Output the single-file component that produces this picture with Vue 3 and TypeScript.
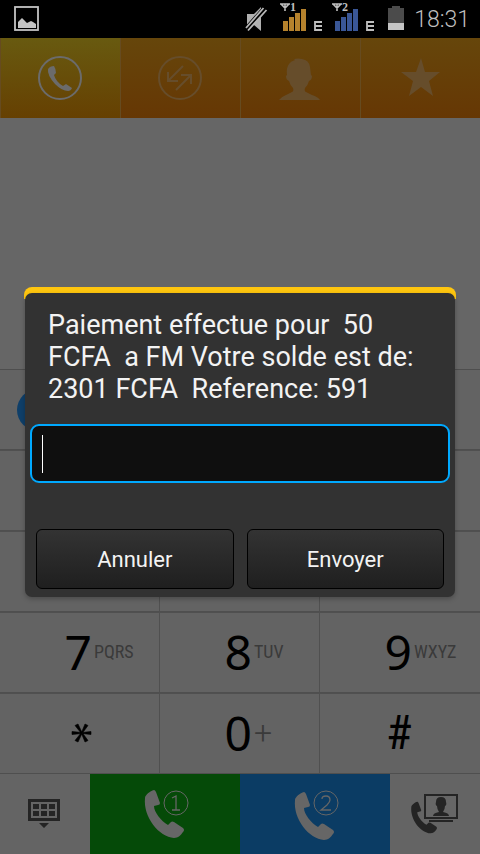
<script setup lang="ts">
import { ref } from 'vue'

interface Key {
  digit: string
  letters: string
  sign?: boolean
}

const tabs = [
  { id: 'dial', label: 'Clavier' },
  { id: 'logs', label: 'Journaux' },
  { id: 'contacts', label: 'Contacts' },
  { id: 'favorites', label: 'Favoris' },
]
const activeTab = ref('dial')

const signals = [
  { sim: '1', tone: 'amber' },
  { sim: '2', tone: 'azure' },
]

const keys: Key[] = [
  { digit: '7', letters: 'PQRS' },
  { digit: '8', letters: 'TUV' },
  { digit: '9', letters: 'WXYZ' },
  { digit: '*', letters: '' },
  { digit: '0', letters: '+', sign: true },
  { digit: '#', letters: '' },
]

const handset =
  'M2 9 C2 6 7 2 11 1 Q12 1 13 3 L17 14 Q17 16 15 16 L11 17 C11 23 18 32 25 36 L28 33 Q29 32 31 33 L40 39 Q42 41 40 43 C38 46 35 49 31 49 C16 48 0 28 2 9Z'

const message = 'Paiement effectue pour  50 FCFA  a FM Votre solde est de: 2301 FCFA  Reference: 591'
const reply = ref('')
</script>

<template>
  <div class="screen">
    <header class="status">
      <svg class="shot" viewBox="0 0 26 26" aria-hidden="true">
        <rect x="1" y="1" width="23" height="23" fill="none" stroke="#c4c4c4" stroke-width="1.8" />
        <path d="M4 22V16L6 14L8 12L10 14L13 17L17 15L19 16L22 18V22Z" fill="#c4c4c4" />
      </svg>
      <div class="indicators">
        <svg class="mute" viewBox="0 0 24 24" aria-hidden="true">
          <path d="M1 7H8L15 0V24L8 18H1Z" fill="#b0b0b0" />
          <path d="M0 22.500L18.500 1.500" stroke="#000" stroke-width="5" />
          <path d="M2 23.500L20.500 3M0 21L17.500 1" stroke="#b8b8b8" stroke-width="1.8" />
        </svg>
        <svg v-for="s in signals" :key="s.sim" class="signal" :class="s.tone" viewBox="0 0 42 31" aria-hidden="true">
          <path d="M0 4H10M1 4L5 8L9 4M5 4V11" fill="none" stroke="#bebebe" stroke-width="1.6" />
          <text x="10" y="11" class="sim">{{ s.sim }}</text>
          <path class="bars" d="M3 21H8V31H3ZM9 17H14V31H9ZM15 13H20V31H15ZM21 9H26V31H21Z" />
          <path d="M42 22H35V30H42M35 26H42" fill="none" stroke="#bebebe" stroke-width="1.8" />
        </svg>
        <svg class="battery" viewBox="0 0 20 24" aria-hidden="true">
          <path d="M4 2H8V0H16V2H20V24H4Z" fill="#4b4b4b" />
          <path d="M4 17H20V24H4Z" fill="#c4c4c4" />
        </svg>
        <time class="clock">18:31</time>
      </div>
    </header>

    <nav class="tabs">
      <button
        v-for="t in tabs"
        :key="t.id"
        type="button"
        class="tab"
        :class="{ active: activeTab === t.id }"
        :aria-label="t.label"
        @click="activeTab = t.id"
      >
        <svg viewBox="0 0 44 44" aria-hidden="true">
          <template v-if="t.id === 'dial'">
            <circle cx="22" cy="22" r="21" fill="none" stroke="currentColor" stroke-width="2" />
            <path d="M10 13Q12 10 16 10Q18 13 18 17L16 19Q18 26 25 30L28 28L34 32Q33 35 30 35Q24 35 17 28Q9 19 10 13Z" fill="currentColor" />
          </template>
          <template v-else-if="t.id === 'logs'">
            <circle cx="22" cy="22" r="21" fill="none" stroke="currentColor" stroke-width="2" />
            <path d="M25 10L10 25M10 16V25H20M18 34L33 19M23 19H33V28" fill="none" stroke="currentColor" stroke-width="2" />
          </template>
          <path
            v-else-if="t.id === 'contacts'"
            d="M1 44Q3 41 8 39L14 36Q16 35 15 32Q12 29 11 25Q8 24 8 20L9 19Q8 12 11 8Q13 5 17 4L16 3Q20 2 24 3Q31 4 32 11L33 19L34 20Q34 24 31 25Q30 29 27 32Q26 35 28 36L34 39Q40 41 42 44Z"
            fill="currentColor"
          />
          <path v-else d="M23 2L27 16H42L31 25L35 40L23 31L11 40L15 25L3 16H18Z" fill="currentColor" />
        </svg>
      </button>
    </nav>

    <main class="number-area"></main>

    <section class="keypad">
      <div class="match"><span class="avatar"></span></div>
      <div v-for="n in 6" :key="n" class="key"></div>
      <button v-for="k in keys" :key="k.digit" type="button" class="key" :aria-label="k.digit">
        <span v-if="k.digit === '*'" class="star">
          <svg viewBox="0 0 20 20" aria-hidden="true">
            <path d="M0 8.500L10 9.500L19 8.500V11.500L10 10.500L0 11.500ZM3 2.500L6 1L10 9.500L10 10.500L6 19L3 17.500L9 10ZM16 2.500L13 1L9.500 9.500L9.500 10.500L13 19L16 17.500L10.500 10Z" stroke="#000" stroke-width=".6" />
          </svg>
        </span>
        <span v-else class="digit" :class="{ hash: k.digit === '#' }">{{ k.digit }}</span>
        <span class="letters" :class="{ sign: k.sign }">{{ k.letters }}</span>
      </button>
    </section>

    <footer class="actions">
      <button type="button" class="action" aria-label="Masquer le clavier">
        <svg class="hide-icon" viewBox="0 0 34 30" aria-hidden="true">
          <path d="M1.500 1.500H30.500V20.500H1.500Z" fill="none" stroke="#242424" stroke-width="3" />
          <path d="M5 5H11V10H5ZM13 5H19V10H13ZM21 5H27V10H21ZM5 12H11V17H5ZM13 12H19V17H13ZM21 12H27V17H21ZM11 24H21L16 29Z" fill="#242424" />
        </svg>
      </button>
      <button type="button" class="action sim-one" aria-label="Appeler SIM un">
        <svg class="call-icon" viewBox="0 0 46 50" aria-hidden="true">
          <path :d="handset" fill="#666" transform="translate(-1)" />
          <circle cx="32" cy="14" r="12" fill="none" stroke="#666" />
          <path d="M28 9L32 7V21M28 21H36" fill="none" stroke="#666" stroke-width="1.3" />
        </svg>
      </button>
      <button type="button" class="action sim-two" aria-label="Appeler SIM deux">
        <svg class="call-icon" viewBox="0 0 46 50" aria-hidden="true">
          <path :d="handset" fill="#666" transform="translate(-1 2)" />
          <circle cx="32" cy="14" r="12" fill="none" stroke="#666" />
          <path d="M28 10Q28 7 32 7Q36 7 36 11Q36 13 33 16L27 21H37" fill="none" stroke="#666" stroke-width="1.3" />
        </svg>
      </button>
      <button type="button" class="action" aria-label="Appel vidéo">
        <svg class="video-icon" viewBox="0 0 48 44" aria-hidden="true">
          <path :d="handset" fill="#242424" transform="translate(-1 9) scale(.66)" />
          <rect x="14" y="3" width="32" height="23" fill="#666" stroke="#242424" stroke-width="2" />
          <path d="M22 24Q22 21 28 20Q26 17 26 14Q24 13 25 10Q25 5 30 5Q35 5 35 10Q36 13 34 14Q34 17 32 20Q38 21 38 24Z" fill="#242424" />
          <path d="M18 29H42" stroke="#242424" stroke-width="2" />
        </svg>
      </button>
    </footer>

    <div class="overlay">
      <form class="dialog" role="dialog" aria-labelledby="ussd-message" @submit.prevent>
        <div class="panel">
          <label id="ussd-message" class="message" for="ussd-reply">{{ message }}</label>
          <div class="field">
            <span class="caret"></span>
            <input id="ussd-reply" v-model="reply" type="text" autocomplete="off" />
          </div>
          <div class="buttons">
            <button type="button">Annuler</button>
            <button type="submit">Envoyer</button>
          </div>
        </div>
      </form>
    </div>
  </div>
</template>

<style>
body {
  margin: 0;
  background: #666;
}
</style>

<style scoped>
* {
  box-sizing: border-box;
}
button {
  margin: 0;
  padding: 0;
  border: 0;
  font: inherit;
  color: inherit;
}
svg {
  display: block;
  overflow: visible;
}
.screen {
  position: relative;
  display: flex;
  flex-direction: column;
  min-height: 100vh;
  background: #666;
  font-family: Roboto, "Noto Sans", sans-serif;
}
.status {
  display: flex;
  justify-content: space-between;
  height: 38px;
  padding: 0 10px 0 14px;
  background: #000;
  color: #bebebe;
}
.shot {
  width: 26px;
  height: 26px;
  margin-top: 6px;
}
.indicators {
  display: flex;
  gap: 10px;
}
.mute {
  width: 24px;
  height: 24px;
  margin-top: 7px;
}
.signal {
  width: 42px;
  height: 31px;
}
.sim {
  font: bold 12px "Liberation Serif", serif;
  fill: #bebebe;
}
.amber .bars {
  fill: #b5822d;
}
.azure .bars {
  fill: #3a5797;
}
.battery {
  width: 20px;
  height: 24px;
  margin-top: 6px;
}
.clock {
  font-size: 23px;
  line-height: 40px;
  font-weight: 300;
}
.tabs {
  display: grid;
  grid-template-columns: repeat(4, 1fr);
  height: 80px;
}
.tab {
  display: flex;
  align-items: center;
  justify-content: center;
  border-left: 1px solid #664b20;
  background: linear-gradient(#66460b, #663704);
  color: #664d2b;
}
.tab.active {
  background: linear-gradient(#685a10, #664002);
  color: #6b6b6b;
}
.tab svg {
  width: 44px;
  height: 44px;
  margin-right: 1px;
}
.number-area {
  flex: 1;
}
.keypad {
  display: grid;
  grid-template-columns: repeat(3, 1fr);
  grid-auto-rows: 81px;
  background: #636363;
}
.match {
  grid-column: 1 / -1;
  display: flex;
  align-items: center;
  padding-left: 17px;
  border-top: 1px solid #4e4e4e;
  border-bottom: 1px solid #4e4e4e;
}
.avatar {
  width: 42px;
  height: 42px;
  border-radius: 50%;
  background: #0f3f69;
}
.key {
  display: grid;
  grid-template-columns: 92px 1fr;
  gap: 2px;
  align-items: center;
  background: #636363;
  border-right: 1px solid #505050;
  border-bottom: 1px solid #4f4f4f;
  box-shadow: inset 0 1px #505050;
  color: #000;
}
.key:nth-child(3n + 1) {
  border-right: 0;
}
.digit,
.star {
  display: flex;
  justify-content: flex-end;
}
.digit {
  font: 48px/80px "Noto Sans", "Open Sans", sans-serif;
}
.digit.hash {
  font-family: "Roboto Condensed", "Liberation Sans Narrow", sans-serif;
}
.star svg {
  width: 20px;
  height: 20px;
}
.letters {
  text-align: left;
  font: 18px/24px "Roboto Condensed", "Liberation Sans Narrow", Roboto, sans-serif;
  color: #3a3a3a;
}
.letters.sign {
  font: 300 32px/32px Roboto, sans-serif;
}
.actions {
  display: grid;
  grid-template-columns: 3fr 5fr 5fr 3fr;
  height: 80px;
}
.action {
  display: flex;
  align-items: center;
  justify-content: center;
  background: #646464;
}
.action.sim-one {
  background: #054a08;
}
.action.sim-two {
  background: #0b3c64;
}
.hide-icon {
  width: 34px;
  height: 30px;
}
.call-icon {
  width: 46px;
  height: 50px;
  margin-left: 4px;
}
.video-icon {
  width: 48px;
  height: 44px;
}
.overlay {
  position: absolute;
  inset: 38px 0 0;
  display: flex;
  align-items: center;
  padding: 0 24px 8px;
}
.dialog {
  flex: 1;
  padding: 6px 1px 0;
  border-radius: 8px;
  background: linear-gradient(#ffc60f 12px, transparent 12px);
}
.panel {
  padding: 16px 5px 8px;
  border-radius: 7px;
  background: #323232;
  box-shadow: 0 2px 5px rgba(0, 0, 0, 0.25);
}
.message {
  display: block;
  padding: 0 18px 19px;
  font-size: 27px;
  line-height: 32px;
  color: #f3f3f3;
  white-space: pre-wrap;
}
.field {
  display: flex;
  align-items: center;
  height: 59px;
  padding: 0 10px;
  border: 2px solid #00a9ff;
  border-radius: 9px;
  background: #0f0f0f;
}
.caret {
  width: 1px;
  height: 38px;
  background: #fff;
}
.field input {
  flex: 1;
  min-width: 0;
  height: 40px;
  border: 0;
  outline: 0;
  background: transparent;
  color: #f3f3f3;
  font: 27px Roboto, sans-serif;
}
.buttons {
  display: grid;
  grid-template-columns: 1fr 1fr;
  gap: 13px;
  padding: 46px 6px 0;
}
.buttons button {
  height: 60px;
  border: 1px solid #000;
  border-radius: 6px;
  background: linear-gradient(#333, #1f1f1f);
  color: #f3f3f3;
  font-size: 22px;
}
</style>
